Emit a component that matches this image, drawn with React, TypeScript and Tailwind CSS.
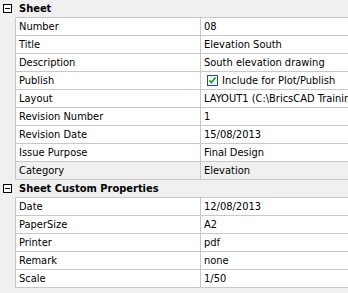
import React from "react";

const font = { fontFamily: "Tahoma, 'DejaVu Sans Condensed', 'Liberation Sans', sans-serif" };

function Minus() {
  return (
    <div className="w-[9px] h-[9px] border border-[#000] bg-white flex items-center justify-center mt-[4px] ml-[3px]">
      <div className="w-[5px] h-[1px] bg-black" />
    </div>
  );
}

function Header({ title }: { title: string }) {
  return (
    <div className="flex h-[18px]">
      <div className="w-[15px] shrink-0">
        <Minus />
      </div>
      <div className="flex-1 border-b border-[#c8c8c8] pl-[4px] flex items-center font-bold text-[11px] text-black leading-none">
        {title}
      </div>
    </div>
  );
}

function Row({ label, value, gray }: { label: string; value: React.ReactNode; gray?: boolean }) {
  const bg = gray ? "bg-[#f0f0f0]" : "bg-white";
  return (
    <div className="flex h-[18px]">
      <div className="w-[15px] shrink-0" />
      <div className={`flex flex-1 border-l border-b border-[#c8c8c8] ${bg} min-w-0`}>
        <div className="w-[185px] shrink-0 border-r border-[#c8c8c8] pl-[3px] flex items-center text-[11px] text-black leading-none whitespace-nowrap overflow-hidden">
          {label}
        </div>
        <div className="flex-1 pl-[3px] flex items-center text-[11px] text-black leading-none whitespace-nowrap overflow-hidden min-w-0">
          {value}
        </div>
      </div>
    </div>
  );
}

function Check() {
  return (
    <span className="inline-flex items-center">
      <span className="w-[11px] h-[11px] border border-[#1c5180] bg-[#f4f4f4] flex items-center justify-center ml-[3px] mr-[4px]">
        <svg width="9" height="9" viewBox="0 0 9 9">
          <path d="M1.5 4.5 L3.5 6.5 L7.5 1.5" stroke="#21a121" strokeWidth="1.8" fill="none" />
        </svg>
      </span>
      Include for Plot/Publish
    </span>
  );
}

export default function App() {
  return (
    <div className="w-[348px] h-[293px] bg-[#f0f0f0] overflow-hidden" style={font}>
      <Header title="Sheet" />
      <Row label="Number" value="08" />
      <Row label="Title" value="Elevation South" />
      <Row label="Description" value="South elevation drawing" />
      <Row label="Publish" value={<Check />} />
      <Row label="Layout" value="LAYOUT1 (C:\BricsCAD Training\Sheets)" />
      <Row label="Revision Number" value="1" />
      <Row label="Revision Date" value="15/08/2013" />
      <Row label="Issue Purpose" value="Final Design" />
      <Row label="Category" value="Elevation" gray />
      <Header title="Sheet Custom Properties" />
      <Row label="Date" value="12/08/2013" />
      <Row label="PaperSize" value="A2" />
      <Row label="Printer" value="pdf" />
      <Row label="Remark" value="none" />
      <Row label="Scale" value="1/50" />
    </div>
  );
}
